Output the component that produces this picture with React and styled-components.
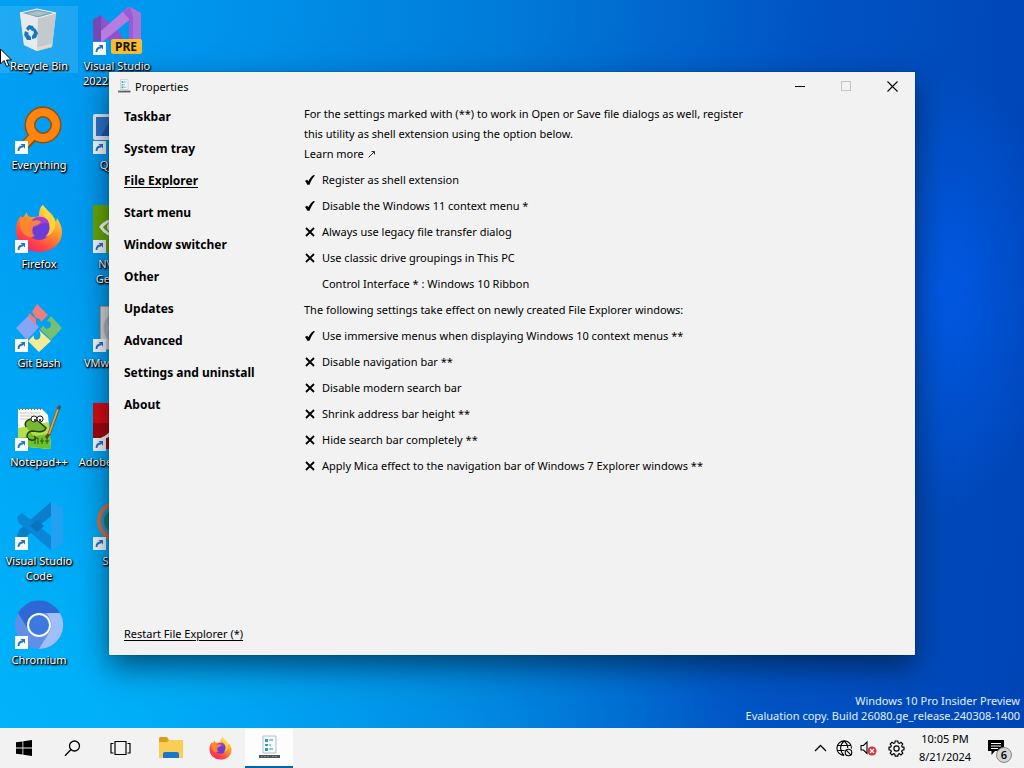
import { useState } from 'react';
import styled, { createGlobalStyle } from 'styled-components';

const GlobalStyle = createGlobalStyle`
    * {
        box-sizing: border-box;
    }

    body {
        margin: 0;
        font-family: "Noto Sans", "Open Sans", sans-serif;
        font-size: 11px;
        color: #000;
        overflow: hidden;
        cursor: default;
    }

    button {
        font: inherit;
        color: inherit;
        border: none;
        background: none;
        padding: 0;
    }
`

const Screen = styled.div`
    display: flex;
    flex-direction: column;
    height: 100vh;
`
const Desktop = styled.main`
    position: relative;
    flex: 1;
    min-height: 0;
    background:
        radial-gradient(ellipse 120px 220px at 92% 40%, rgba(0, 92, 236, 0.8), rgba(0, 92, 236, 0)),
        radial-gradient(ellipse 70% 70% at 0% 100%, rgba(0, 186, 252, 0.8), rgba(0, 186, 252, 0)),
        linear-gradient(94deg, #00a0f4 0%, #0094ec 20%, #007ad8 48%, #0054c4 75%, #0044b6 100%);
`
const IconGrid = styled.div`
    display: grid;
    grid-auto-flow: column;
    grid-template-rows: repeat(7, 99px);
    grid-auto-columns: 78px;
    justify-content: start;
    padding-top: 6px;
`
const Shortcut = styled.button`
    display: flex;
    flex-direction: column;
    align-items: center;
    align-self: start;
    gap: 3px;
    padding-top: 1px;
    color: #fff;
    line-height: 15px;
    text-shadow: 1px 1px 2px #000, 0 1px 2px #000, 1px 1px 1px #000;
    background: ${props => props.$hovered ? 'rgba(160, 210, 240, 0.2)' : 'none'};

    svg {
        display: block;
    }
`
const Watermark = styled.div`
    position: absolute;
    right: 4px;
    bottom: 5px;
    color: #e4f0ff;
    line-height: 15px;
    text-align: right;
`
const Pointer = styled.svg`
    position: absolute;
    left: 0;
    top: 48px;
`

const Window = styled.section`
    position: absolute;
    top: 72px;
    right: 109px;
    bottom: 73px;
    left: 109px;
    display: flex;
    flex-direction: column;
    background: #f2f2f2;
    box-shadow: 0 0 1px rgba(0, 0, 0, 0.5), 0 12px 28px rgba(0, 20, 40, 0.6);
`
const TitleBar = styled.header`
    display: flex;
    align-items: center;
    height: 28px;
    padding-left: 8px;

    h1 {
        flex: 1;
        margin: 0 0 0 4px;
        font-size: 11px;
        font-weight: 400;
    }
`
const CaptionButton = styled.button`
    display: flex;
    align-items: center;
    justify-content: center;
    width: 46px;
    height: 28px;
    color: ${props => props.disabled ? '#c4c4c4' : '#000'};
`
const WindowBody = styled.div`
    display: flex;
    flex: 1;
    min-height: 0;
    padding: 0 15px 11px 15px;
`
const Sidebar = styled.nav`
    display: flex;
    flex-direction: column;
    align-items: flex-start;
    width: 180px;
`
const SidebarItem = styled.button`
    height: 32px;
    font-size: 12px;
    font-weight: 700;
    text-decoration: ${props => props.$active ? 'underline' : 'none'};
    text-underline-offset: 2px;
`
const RestartButton = styled.button`
    margin-top: auto;
    line-height: 20px;
    text-decoration: underline;
    text-underline-offset: 2px;
`
const Page = styled.div`
    display: flex;
    flex-direction: column;
    align-items: flex-start;
    gap: 6px;
    flex: 1;
    padding-top: 4px;
    line-height: 20px;
`
const Intro = styled.div`
    max-width: 460px;

    p {
        margin: 0;
    }

    a {
        display: inline-flex;
        align-items: center;
        gap: 4px;
        color: inherit;
        text-decoration: none;
    }
`
const Note = styled.p`
    margin: 0;
`
const DropRow = styled.button`
    padding-left: 18px;
    line-height: 20px;
`
const Option = styled.label`
    display: grid;
    grid-template-columns: 12px auto;
    column-gap: 6px;
    align-items: center;

    input {
        grid-area: 1 / 1;
        appearance: none;
        width: 12px;
        height: 12px;
        margin: 0;
    }

    svg {
        grid-area: 1 / 1;
        pointer-events: none;
    }
`

const Taskbar = styled.footer`
    display: flex;
    align-items: stretch;
    height: 40px;
    background: #f2f2f2;
`
const TaskButton = styled.button`
    display: flex;
    align-items: center;
    justify-content: center;
    width: 48px;
    background: ${props => props.$active ? '#fdfdfd' : 'none'};
    border-bottom: ${props => props.$active ? '2px solid #0067a8' : 'none'};
`
const Pinned = styled.div`
    display: flex;
    align-items: stretch;
    gap: 1px;
    margin-left: 3px;
`
const Tray = styled.div`
    display: flex;
    align-items: stretch;
    margin-left: auto;
`
const TrayButton = styled.button`
    display: flex;
    align-items: center;
    justify-content: center;
    width: ${props => props.$wide ? '32px' : '24px'};
`
const Clock = styled.button`
    width: 66px;
    line-height: 18px;
`
const ActionCenter = styled.button`
    position: relative;
    display: flex;
    align-items: center;
    justify-content: center;
    width: 46px;
    padding-right: 10px;
`
const Badge = styled.span`
    position: absolute;
    right: 12px;
    bottom: 5px;
    width: 16px;
    height: 16px;
    border: 1px solid #888;
    border-radius: 50%;
    background: #d4d4d4;
    line-height: 14px;
    font-weight: 600;
`

const LinkArrow = () => (
    <g transform="translate(0 35)">
        <rect width="13" height="13" fill="#f7fbff" />
        <path d="M3.500 10c0-3 1.500-4.500 4.500-4.500" fill="none" stroke="#2872b8" strokeWidth="1.800" />
        <path d="M5.500 3H10v4.500z" fill="#2872b8" />
    </g>
)

const RecycleArt = () => (
    <>
        <path d="M5 6l17-4 19 4-4 34-15 4-13-6z" fill="#dfe6ea" />
        <path d="M5 6l18 5-1 33-13-6z" fill="#e6eaec" />
        <path d="M23 11l18-5-4 34-15 4z" fill="#c3c9cc" />
        <path d="M5 6l17-4 19 4-18 5z" fill="#7ea5b6" stroke="#eef2f3" strokeWidth="1.200" />
        <path d="M12 7l10-3 12 2-11 3z" fill="#a9c2cc" />
        <path d="M22 43.500l15-4v-3l-15 4z" fill="#e6d9cb" />
        <path d="M11 21l3-3 4 1 2 4-3 1-2-2-2 2zM20 21l3 5-2 5-4 1v-3l2-3-1-3zM16 33h-4l-3-5 1-4 4 2-1 1 3 3z" fill="#1878bd" />
    </>
)
const VisualStudioArt = () => (
    <>
        <path d="M0 13l8-5 21 20v8L0 30z" fill="#8b54cf" />
        <path d="M0 13l8-5v26H0z" fill="#7548b4" />
        <path d="M8 24L35 0l5 3v7L8 36z" fill="#b87ce0" />
        <path d="M29 4l8-4 11 6v38H36V12z" fill="#9a5bd6" />
        <path d="M37 0l11 6v28h-8V10z" fill="#a873d8" />
        <rect x="18" y="32" width="31" height="15" rx="2" fill="#f8bd30" />
        <text x="33" y="44" textAnchor="middle" fontSize="12" fontWeight="700" fill="#1c1400" style={{ textShadow: 'none' }}>PRE</text>
        <LinkArrow />
    </>
)
const EverythingArt = () => (
    <>
        <path d="M19 30L7 42" stroke="#8c5207" strokeWidth="10" strokeLinecap="round" />
        <circle cx="28" cy="19" r="13" fill="none" stroke="#8c5207" strokeWidth="11" />
        <circle cx="28" cy="19" r="13" fill="none" stroke="#ff8410" strokeWidth="8" />
        <path d="M19 29L7 42" stroke="#ff8410" strokeWidth="7" strokeLinecap="round" />
        <LinkArrow />
    </>
)
const MonitorArt = () => (
    <>
        <rect x="0" y="8" width="48" height="26" rx="2" fill="#e9eef4" />
        <rect x="3" y="11" width="42" height="19" fill="#1a55b0" />
        <path d="M3 11h16L8 30H3z" fill="#2f74c8" />
        <LinkArrow />
    </>
)
const FoxShape = () => (
    <>
        <defs>
            <linearGradient id="fox" x1="0.800" y1="0" x2="0.200" y2="1">
                <stop offset="0" stopColor="#fff24a" />
                <stop offset="0.400" stopColor="#ff9a2a" />
                <stop offset="0.750" stopColor="#ff4546" />
                <stop offset="1" stopColor="#ee1c75" />
            </linearGradient>
        </defs>
        <path d="M28 0c3 4 6 6 7 10 3 1 5 4 6 7l1-4c3 5 5 9 5 14 0 12-10 20-23 20S1 38 1 25c0-5 1-10 5-14l1 3 5-7c0 4 2 5 5 5 2 0 5 0 7-1 0-5 1-9 4-11z" fill="url(#fox)" />
        <circle cx="24" cy="24" r="11" fill="#6d3bd8" />
        <path d="M14 21c1-5 4-8 8-9 7-1 12 2 13 8-4-3-8-2-10 0-3 2-7 3-11 1z" fill="#a63fd0" />
        <path d="M6 12c5 0 9 1 12 4 3-1 6-1 8 1-2 3-6 3-8 5-1 4-1 7 2 9-4 2-9 1-12-3-3-5-4-10-2-16z" fill="#ff8a2e" opacity="0.900" />
        <path d="M28 0c-3 4-1 9 3 13 5 5 5 14-1 19 10-3 13-13 8-21-2-4-8-6-10-11z" fill="#ffd83a" opacity="0.850" />
    </>
)
const FirefoxArt = () => (
    <>
        <FoxShape />
        <LinkArrow />
    </>
)
const NvidiaArt = () => (
    <>
        <rect width="48" height="48" fill="#69a800" />
        <path d="M8 22c8-10 22-9 30 1-7 9-22 11-30-1z" fill="none" stroke="#fff" strokeWidth="3" />
        <circle cx="19" cy="22" r="5" fill="#fff" />
        <LinkArrow />
    </>
)
const GitArt = () => (
    <>
        <path d="M1 24l12-12 11 11-12 13z" fill="#86a5f4" />
        <path d="M22 0l11 11-7 7c-1-3-2-4-5-4l-4-6z" fill="#f07c7c" />
        <path d="M14 9l7 6v6l-8-8z" fill="#f07c7c" />
        <path d="M36 12l11 12-11 12-11-11 4-4c0 5 6 5 7 0 0-2-1-4-4-4z" fill="#75bf70" />
        <path d="M24 26l12 11-12 11-11-11 6-6c-1 4 2 6 5 4 2-2 2-5 0-9z" fill="#f5eb94" />
        <LinkArrow />
    </>
)
const VmwareArt = () => (
    <>
        <rect x="7" y="2" width="41" height="44" fill="#dadada" stroke="#777" />
        <circle cx="28" cy="24" r="15" fill="none" stroke="#b4b9be" strokeWidth="5" />
        <LinkArrow />
    </>
)
const NotepadArt = () => (
    <>
        <path d="M3 6h24l6 6 3 34-33-3z" fill="#fbfbf4" />
        <path d="M3 25l31-6 2 27-33-3z" fill="#b4e04f" />
        <path d="M3 35l32-4 1 15-33-3z" fill="#6fc02f" />
        <path d="M5 10h20M5 13h22M5 16h24" stroke="#c9c9c9" />
        <path d="M4 6h22" stroke="#777" strokeWidth="2" strokeDasharray="1 2" />
        <path d="M11 24c-3-6 4-9 10-8l10 9c-2 5-8 4-13 3-7 0-8 8-2 9 4 1 6-2 3-4" fill="#76b82d" stroke="#253d0d" strokeWidth="1.500" />
        <circle cx="19" cy="16" r="3" fill="#fff" stroke="#222" />
        <circle cx="25" cy="16" r="3" fill="#fff" stroke="#222" />
        <circle cx="20" cy="17" r="1" />
        <circle cx="25" cy="17" r="1" />
        <path d="M20 41v-6h3v6M27 35v6M25 38h4M32 35v6M30 38h4" fill="none" stroke="#215b12" />
        <path d="M44 4L34 31l-3 4" fill="none" stroke="#6b4216" strokeWidth="3" />
        <path d="M43 6L34 31" stroke="#e0a53c" strokeWidth="2" />
        <path d="M44 2l2 1-1 4-3-1z" fill="#514d49" />
        <LinkArrow />
    </>
)
const AdobeArt = () => (
    <>
        <rect width="48" height="46" fill="#a80408" />
        <path d="M0 0h48v20H0z" fill="#d80a0e" />
        <path d="M8 36c12-5 17-16 16-27 4 16 10 20 18 19-14 0-23 3-34 8z" fill="none" stroke="#fff" strokeWidth="2" />
        <LinkArrow />
    </>
)
const CodeArt = () => (
    <>
        <path d="M36 0l12 6v36l-12 6z" fill="#2b9ff2" opacity="0.800" />
        <path d="M36 0v14L7 38l-5-4 2-6z" fill="#0a7dcb" />
        <path d="M36 48V34L7 11l-5 4 2 6z" fill="#0a86d6" />
        <path d="M15 24l7-6 7 6-7 6z" fill="#0874be" />
        <LinkArrow />
    </>
)
const SnipArt = () => (
    <>
        <circle cx="24" cy="19" r="18" fill="#2395c8" stroke="#d3713f" strokeWidth="4" />
        <circle cx="22" cy="19" r="11" fill="#177a73" />
        <LinkArrow />
    </>
)
const ChromiumArt = () => (
    <>
        <circle cx="24" cy="24" r="24" fill="#5f8fe6" />
        <path d="M3 12a24 24 0 0 1 42 0H24a12 12 0 0 0-11 16z" fill="#2c69d5" />
        <path d="M45 12a24 24 0 0 1-21 36l11-18c3-6 1-13-4-18z" fill="#a0bff8" />
        <circle cx="24" cy="24" r="12" fill="#f4faff" />
        <circle cx="24" cy="24" r="10" fill="#3b78df" />
        <LinkArrow />
    </>
)

const shortcuts = [
    { name: 'Recycle Bin', Art: RecycleArt, hovered: true },
    { name: 'Everything', Art: EverythingArt },
    { name: 'Firefox', Art: FirefoxArt },
    { name: 'Git Bash', Art: GitArt },
    { name: 'Notepad++', Art: NotepadArt },
    { name: 'Visual Studio Code', Art: CodeArt },
    { name: 'Chromium', Art: ChromiumArt },
    { name: 'Visual Studio 2022 Preview', Art: VisualStudioArt },
    { name: 'Qjview', Art: MonitorArt },
    { name: 'NVIDIA GeForce', Art: NvidiaArt },
    { name: 'VMware\u00a0Play', Art: VmwareArt },
    { name: 'Adobe\u00a0Acrobat', Art: AdobeArt },
    { name: 'Snipit', Art: SnipArt },
]

const sections = [
    'Taskbar', 'System tray', 'File Explorer', 'Start menu', 'Window switcher',
    'Other', 'Updates', 'Advanced', 'Settings and uninstall', 'About',
]

const shellOptions = [
    { label: 'Register as shell extension', on: true },
    { label: 'Disable the Windows 11 context menu *', on: true },
    { label: 'Always use legacy file transfer dialog', on: false },
    { label: 'Use classic drive groupings in This PC', on: false },
]
const windowOptions = [
    { label: 'Use immersive menus when displaying Windows 10 context menus **', on: true },
    { label: 'Disable navigation bar **', on: false },
    { label: 'Disable modern search bar', on: false },
    { label: 'Shrink address bar height **', on: false },
    { label: 'Hide search bar completely **', on: false },
    { label: 'Apply Mica effect to the navigation bar of Windows 7 Explorer windows **', on: false },
]

const PropertiesIcon = ({ size }) => (
    <svg width={size} height={size} viewBox="0 0 24 24">
        <path d="M6 1h13v17H6z" fill="#f4f9fa" stroke="#b4c2c8" />
        <path d="M8 4h3v3H8zM8 9h3v2H8zM8 13h3v3H8z" fill="#3a96a6" />
        <path d="M12 5h4M12 10h2M12 14h4" stroke="#74b8c6" strokeWidth="1.500" />
        <path d="M2 20h21v3H2z" fill="#4d5357" />
        <path d="M4 21.500h8M15 21.500h5" stroke="#858c90" strokeDasharray="2 1" />
    </svg>
)

const CheckRow = ({ label, on }) => {
    const [checked, setChecked] = useState(on);

    return (
        <Option>
            <input type="checkbox" checked={checked} onChange={() => setChecked(!checked)} />
            <svg width="12" height="12" viewBox="0 0 12 12">
                {checked
                    ? <path d="M1 7l2-1.300c.7.500 1.100 1 1.400 1.600C5.600 4.800 7.200 2.700 9.500 1l1.500.6C8.500 4.400 6.800 7.200 5.500 10.800H3.300C2.700 9.400 2 8.200 1 7z" />
                    : <path d="M2 2l8 8M10 2l-8 8" fill="none" stroke="#000" strokeWidth="1.800" />}
            </svg>
            <span>{label}</span>
        </Option>
    )
}

const PropertiesWindow = () => {
    const [section, setSection] = useState('File Explorer');

    return (
        <Window>
            <TitleBar>
                <PropertiesIcon size={14} />
                <h1>Properties</h1>
                <CaptionButton aria-label="Minimize">
                    <svg width="11" height="11"><path d="M0 5.500h10" stroke="currentColor" /></svg>
                </CaptionButton>
                <CaptionButton aria-label="Maximize" disabled>
                    <svg width="11" height="11"><rect x="0.500" y="0.500" width="9" height="9" fill="none" stroke="currentColor" /></svg>
                </CaptionButton>
                <CaptionButton aria-label="Close">
                    <svg width="11" height="11"><path d="M0.500 0.500l10 10M10.500 0.500l-10 10" stroke="currentColor" strokeWidth="1.100" /></svg>
                </CaptionButton>
            </TitleBar>
            <WindowBody>
                <Sidebar>
                    {sections.map(name => (
                        <SidebarItem key={name} $active={name === section} onClick={() => setSection(name)}>{name}</SidebarItem>
                    ))}
                    <RestartButton>Restart File Explorer (*)</RestartButton>
                </Sidebar>
                <Page>
                    <Intro>
                        <p>For the settings marked with (**) to work in Open or Save file dialogs as well, register this utility as shell extension using the option below.</p>
                        <a href="#learn">
                            Learn more
                            <svg width="8" height="8"><path d="M0.500 7.500L6.500 1.500M3.500 1.500h3v3" fill="none" stroke="#333" /></svg>
                        </a>
                    </Intro>
                    {shellOptions.map(option => <CheckRow key={option.label} {...option} />)}
                    <DropRow>Control Interface * : Windows 10 Ribbon</DropRow>
                    <Note>The following settings take effect on newly created File Explorer windows:</Note>
                    {windowOptions.map(option => <CheckRow key={option.label} {...option} />)}
                </Page>
            </WindowBody>
        </Window>
    )
}

const App = () => {
    return (
        <Screen>
            <GlobalStyle />
            <Desktop>
                <IconGrid>
                    {shortcuts.map(({ name, Art, hovered }) => (
                        <Shortcut key={name} $hovered={hovered}>
                            <svg width="48" height="48" viewBox="0 0 48 48" overflow="visible"><Art /></svg>
                            <span>{name}</span>
                        </Shortcut>
                    ))}
                </IconGrid>
                <Watermark>
                    Windows 10 Pro Insider Preview<br />
                    Evaluation copy. Build 26080.ge_release.240308-1400
                </Watermark>
                <PropertiesWindow />
                <Pointer width="12" height="20" viewBox="0 0 12 20">
                    <path d="M0.500 1v15l3.500-3.500 2.500 6 2.500-1-2.500-5.500h5z" fill="#fff" stroke="#000" />
                </Pointer>
            </Desktop>
            <Taskbar>
                <TaskButton aria-label="Start">
                    <svg width="16" height="16" viewBox="0 0 16 16"><path d="M0 2.300L6.500 1.400v6.200H0zM7.300 1.300L16 0v7.600H7.300zM0 8.400h6.500v6.200L0 13.700zM7.300 8.400H16V16l-8.700-1.300z" /></svg>
                </TaskButton>
                <TaskButton aria-label="Search">
                    <svg width="17" height="17" viewBox="0 0 17 17" fill="none" stroke="#000" strokeWidth="1.300"><circle cx="10.500" cy="6" r="5" /><path d="M7 9.500L1 15.800" /></svg>
                </TaskButton>
                <TaskButton aria-label="Task view">
                    <svg width="21" height="16" viewBox="0 0 21 16" fill="none" stroke="#000" strokeWidth="1.200"><path d="M5 1.500h11v13H5zM3.500 3.500H1v9.500h2.500M17.500 3.500H20v9.500h-2.500" /></svg>
                </TaskButton>
                <Pinned>
                    <TaskButton aria-label="File Explorer">
                        <svg width="24" height="22" viewBox="0 0 24 22">
                            <path d="M0 1.500Q0 0 1.500 0H8l2 3h14v7H0z" fill="#dc9e1c" />
                            <path d="M0 5h8l2-2h14v18H0z" fill="#fbcd55" />
                            <path d="M4 17q0-2 2-2h12q2 0 2 2v4H4z" fill="#1776ce" />
                        </svg>
                    </TaskButton>
                    <TaskButton aria-label="Firefox">
                        <svg width="23" height="23" viewBox="0 0 48 48"><FoxShape /></svg>
                    </TaskButton>
                    <TaskButton aria-label="Properties" $active>
                        <PropertiesIcon size={24} />
                    </TaskButton>
                </Pinned>
                <Tray>
                    <TrayButton aria-label="Show hidden icons">
                        <svg width="13" height="8" fill="none" stroke="#000" strokeWidth="1.300"><path d="M1 7l5.500-5.500L12 7" /></svg>
                    </TrayButton>
                    <TrayButton aria-label="Network">
                        <svg width="17" height="17" viewBox="0 0 17 17" fill="none" stroke="#000" strokeWidth="1.100">
                            <path d="M8 15.500a7.300 7.300 0 1 1 7.500-7M8 15.500C3.500 11 3.500 5 8 1c3 2.500 3.800 5 3.700 7M1 5.500h13.500M1 10.500h7.500" />
                            <circle cx="12.500" cy="12.500" r="3.300" />
                            <path d="M10.200 10.200l4.600 4.600" />
                        </svg>
                    </TrayButton>
                    <TrayButton aria-label="Volume muted">
                        <svg width="17" height="16" viewBox="0 0 17 16">
                            <path d="M1 5.500h2.500L7 2v11.500L3.500 10H1z" fill="none" stroke="#000" strokeWidth="1.100" />
                            <circle cx="12" cy="11" r="4.500" fill="#d7303a" />
                            <path d="M10 9l4 4M14 9l-4 4" stroke="#fff" strokeWidth="1.300" />
                        </svg>
                    </TrayButton>
                    <TrayButton aria-label="Settings" $wide>
                        <svg width="17" height="17" viewBox="0 0 17 17" fill="none" stroke="#000" strokeWidth="1.200">
                            <path d="M7.200 1h2.600l.4 1.900 1.200.5L13 2.300 14.800 4l-1.100 1.700.5 1.200 1.800.4v2.500l-1.800.4-.5 1.200 1.100 1.700L13 14.900l-1.600-1.100-1.200.5-.4 1.800H7.200l-.4-1.800-1.200-.5L4 14.900l-1.800-1.800 1.100-1.700-.5-1.200L1 9.800V7.300l1.800-.4.5-1.200L2.200 4 4 2.300l1.600 1.100 1.200-.5z" />
                            <circle cx="8.500" cy="8.500" r="2.600" />
                        </svg>
                    </TrayButton>
                    <Clock>10:05 PM<br />8/21/2024</Clock>
                    <ActionCenter aria-label="Notifications">
                        <svg width="16" height="16" viewBox="0 0 16 16">
                            <path d="M0 0h16v11H7l-3.500 4v-4H0z" />
                            <path d="M3 3.500h10M3 6h10M3 8.500h7" stroke="#fff" />
                        </svg>
                        <Badge>6</Badge>
                    </ActionCenter>
                </Tray>
            </Taskbar>
        </Screen>
    )
}

export default App;
